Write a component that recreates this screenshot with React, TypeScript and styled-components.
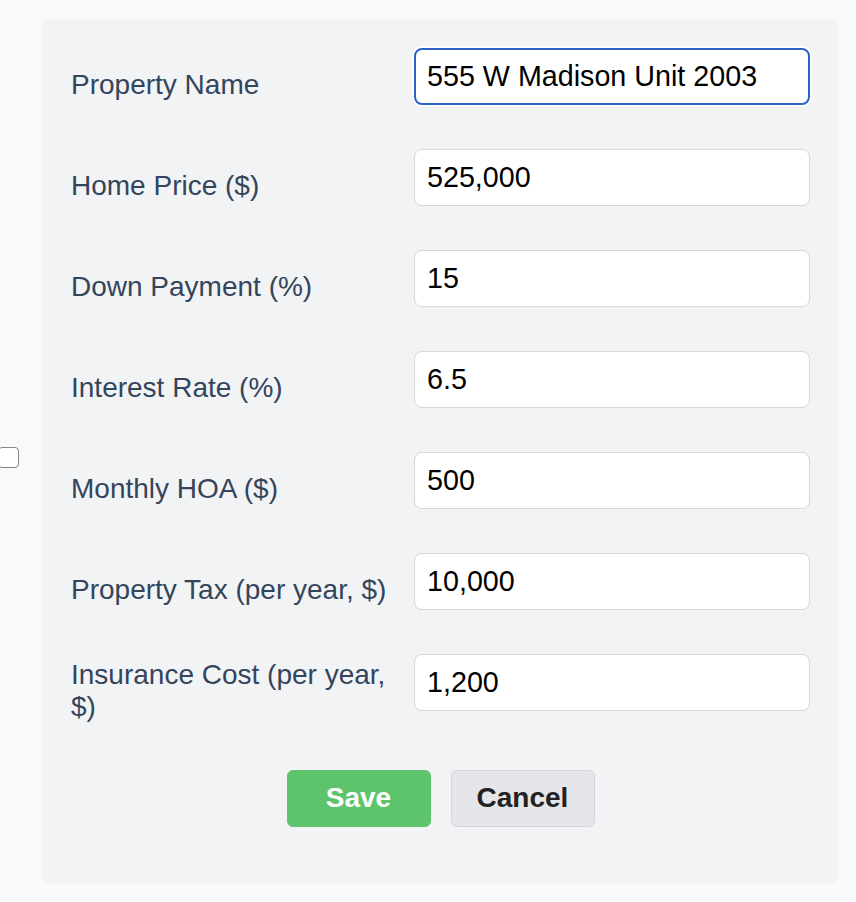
import React from "react";
import styled, { createGlobalStyle } from "styled-components";

const Global = createGlobalStyle`
  html, body {
    margin: 0;
    padding: 0;
    background: #f8f9fb;
    font-family: "Liberation Sans", Arial, Helvetica, sans-serif;
  }
  * { box-sizing: border-box; }
`;

const Page = styled.div`
  min-height: 902px;
  display: flex;
  align-items: center;
  padding: 18px 0 18px 0;
  background: #f8f9fb;
`;

const Check = styled.input.attrs({ type: "checkbox" })`
  appearance: none;
  -webkit-appearance: none;
  flex: none;
  width: 21px;
  height: 21px;
  margin: 13px 23px 0 -2px;
  border: 1.5px solid #858585;
  border-radius: 4px;
  background: #ffffff;
`;

const Card = styled.form`
  width: 796px;
  flex: none;
  background: #f2f3f5;
  border-radius: 9px;
  padding: 29px 28px 57px 29px;
`;

const Grid = styled.div`
  display: grid;
  grid-template-columns: 325px 396px;
  column-gap: 18px;
  row-gap: 26px;
  align-items: center;
`;

const Label = styled.label`
  font-size: 28px;
  line-height: 32px;
  color: #34455b;
`;

const Field = styled.input<{ $focused?: boolean }>`
  width: 396px;
  height: 57px;
  margin: 0 0 18px 0;
  padding: 0 12px;
  border-radius: 8px;
  border: ${(p) => (p.$focused ? "2px solid #2d62c8" : "1px solid #d5d7db")};
  padding-left: ${(p) => (p.$focused ? "11px" : "12px")};
  box-shadow: ${(p) => (p.$focused ? "0 0 0 2px #ffffff" : "none")};
  background: #ffffff;
  font-family: "Liberation Sans", Arial, Helvetica, sans-serif;
  font-size: 28.7px;
  color: #000000;
  outline: none;
`;

const Actions = styled.div`
  display: flex;
  justify-content: center;
  gap: 20px;
  margin-top: 41px;
`;

const Button = styled.button<{ $variant: "save" | "cancel" }>`
  width: 144px;
  height: 57px;
  border-radius: 6px;
  font-family: "Liberation Sans", Arial, Helvetica, sans-serif;
  font-weight: bold;
  font-size: 28px;
  cursor: pointer;
  background: ${(p) => (p.$variant === "save" ? "#5dc46c" : "#e5e6ea")};
  color: ${(p) => (p.$variant === "save" ? "#ffffff" : "#222222")};
  border: ${(p) => (p.$variant === "save" ? "1px solid #5dc46c" : "1px solid #d3d5da")};
`;

const fields = [
  { label: "Property Name", value: "555 W Madison Unit 2003", focused: true },
  { label: "Home Price ($)", value: "525,000" },
  { label: "Down Payment (%)", value: "15" },
  { label: "Interest Rate (%)", value: "6.5" },
  { label: "Monthly HOA ($)", value: "500" },
  { label: "Property Tax (per year, $)", value: "10,000" },
  { label: "Insurance Cost (per year, $)", value: "1,200" },
];

export default function App() {
  return (
    <>
      <Global />
      <Page>
        <Check />
        <Card onSubmit={(e) => e.preventDefault()}>
          <Grid>
            {fields.map((f, i) => (
              <React.Fragment key={f.label}>
                <Label htmlFor={`f${i}`}>{f.label}</Label>
                <Field id={`f${i}`} defaultValue={f.value} $focused={f.focused} />
              </React.Fragment>
            ))}
          </Grid>
          <Actions>
            <Button type="button" $variant="save">Save</Button>
            <Button type="button" $variant="cancel">Cancel</Button>
          </Actions>
        </Card>
      </Page>
    </>
  );
}
